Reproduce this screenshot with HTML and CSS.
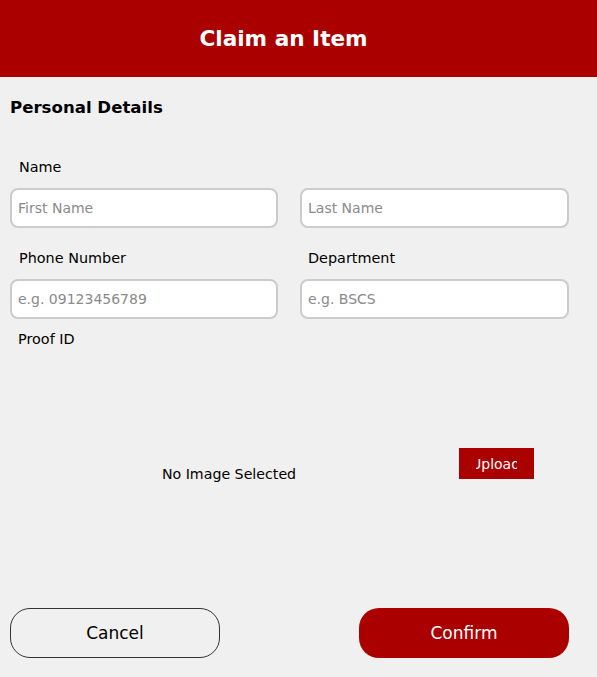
FILE: index.html
```html
<!DOCTYPE html>
<html>
<head>
<meta charset="utf-8">
<link rel="stylesheet" href="styles.css">
</head>
<body>
<header class="topbar"><h1 class="title">Claim an Item</h1></header>
<main class="content">
  <h2 class="section">Personal Details</h2>
  <div class="grid">
    <div class="field">
      <label class="label">Name</label>
      <input class="input" placeholder="First Name">
    </div>
    <div class="field">
      <label class="label label-empty">&nbsp;</label>
      <input class="input" placeholder="Last Name">
    </div>
    <div class="field field-gap">
      <label class="label">Phone Number</label>
      <input class="input" placeholder="e.g. 09123456789">
    </div>
    <div class="field field-gap">
      <label class="label label-right">Department</label>
      <input class="input" placeholder="e.g. BSCS">
    </div>
  </div>
  <div class="proof-label">Proof ID</div>
  <div class="proof">
    <div class="preview">No Image Selected</div>
    <div class="upload"><span class="upload-clip"><span class="upload-text">Upload</span></span></div>
  </div>
  <div class="actions">
    <button class="btn btn-cancel">Cancel</button>
    <button class="btn btn-confirm">Confirm</button>
  </div>
</main>
</body>
</html>
```
FILE: styles.css
```css
* { box-sizing: border-box; }
body {
  margin: 0;
  background: #f0f0f0;
  font-family: "DejaVu Sans", sans-serif;
  color: #000;
  width: 597px;
  height: 677px;
  overflow: hidden;
}
.topbar {
  height: 77px;
  background: #aa0000;
  display: flex;
  align-items: center;
  justify-content: center;
  padding-right: 30px;
}
.title {
  margin: 0;
  color: #fff;
  font-size: 21.6px;
  font-weight: bold;
  line-height: 1;
}
.content {
  padding: 0 28px 0 10px;
}
.section {
  margin: 0;
  padding-top: 20px;
  font-size: 16.6px;
  font-weight: bold;
  line-height: 22px;
  height: 80px;
}
.grid {
  display: grid;
  grid-template-columns: 268px 269px;
  column-gap: 22px;
}
.field { display: flex; flex-direction: column; }
.field-gap { margin-top: 20px; }
.label {
  font-size: 14.4px;
  line-height: 20px;
  padding-left: 9px;
  margin-bottom: 11px;
  height: 20px;
}
.label-right { padding-left: 8px; }
.input {
  height: 40px;
  border: 2px solid #cccccc;
  border-radius: 8px;
  background: #fff;
  padding: 0 6px;
  font-family: "DejaVu Sans", sans-serif;
  font-size: 14px;
  outline: none;
}
.input::placeholder { color: #8a8a8a; }
.proof-label {
  margin-top: 10px;
  padding-left: 8px;
  font-size: 14.4px;
  line-height: 20px;
  height: 20px;
}
.proof {
  display: flex;
  align-items: flex-start;
  height: 259px;
}
.preview {
  width: 438px;
  height: 250px;
  display: flex;
  align-items: center;
  justify-content: center;
  font-size: 14.2px;
}
.upload {
  margin-left: 11px;
  margin-top: 99px;
  width: 75px;
  height: 31px;
  background: #aa0000;
  color: #fff;
  font-size: 14px;
  display: flex;
  align-items: center;
  justify-content: center;
}
.upload-clip {
  display: block;
  width: 41px;
  overflow: hidden;
  white-space: nowrap;
}
.upload-text { display: inline-block; margin-left: -5px; }
.actions {
  display: flex;
  justify-content: space-between;
}
.btn {
  width: 210px;
  height: 50px;
  border-radius: 20px;
  font-family: "DejaVu Sans", sans-serif;
  font-size: 17px;
  cursor: pointer;
}
.btn-cancel {
  background: transparent;
  border: 1px solid #333;
  color: #000;
}
.btn-confirm {
  background: #aa0000;
  border: none;
  color: #fff;
}
```
